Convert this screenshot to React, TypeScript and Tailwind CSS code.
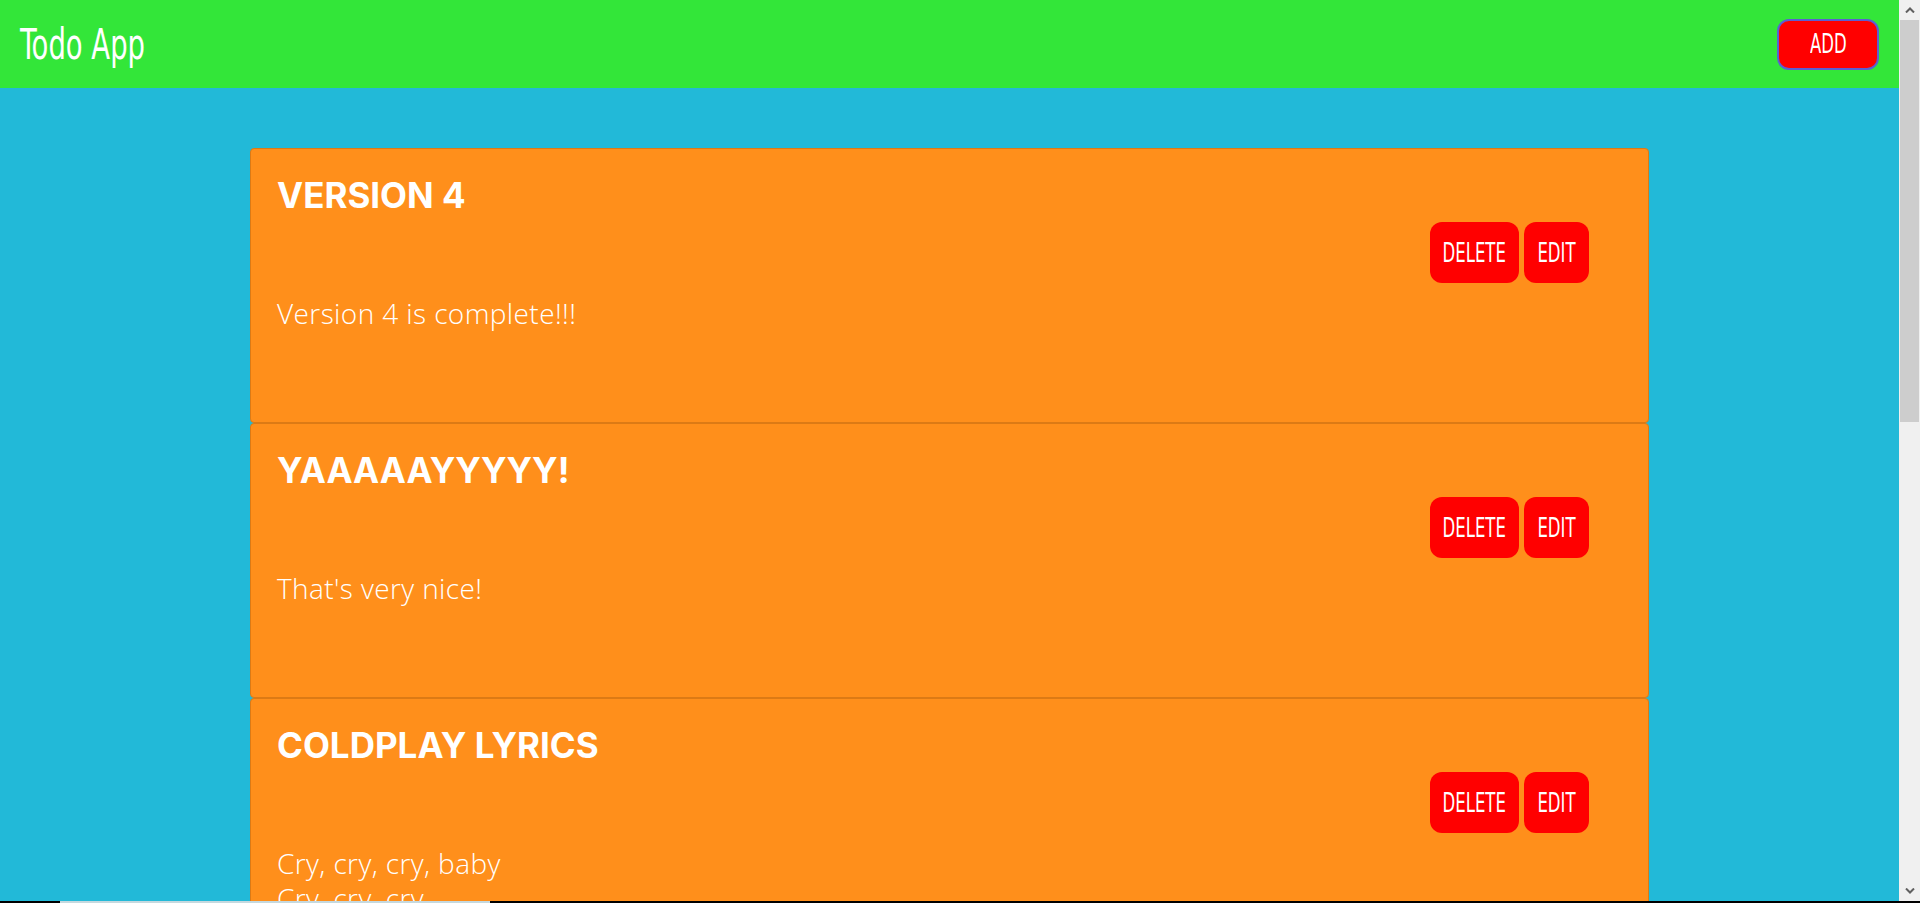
import React from "react";

interface Todo {
  id: number;
  title: string;
  body: string[];
}

const todos: Todo[] = [
  { id: 1, title: "VERSION 4", body: ["Version 4 is complete!!!"] },
  { id: 2, title: "YAAAAAYYYYY!", body: ["That's very nice!"] },
  { id: 3, title: "COLDPLAY LYRICS", body: ["Cry, cry, cry, baby", "Cry, cry, cry"] },
];

// condensed face stands in for Oswald
const condensed = {
  fontFamily: '"DejaVu Sans Condensed", "DejaVu Sans", sans-serif',
};

const Chevron = ({ down }: { down?: boolean }) => (
  <svg width="10" height="6" viewBox="0 0 10 6" className={down ? "rotate-180" : ""}>
    <path d="M1 5.5 L5 1.5 L9 5.5" fill="none" stroke="#606060" strokeWidth="2" />
  </svg>
);

const Scrollbar = () => (
  <div className="w-[21px] shrink-0 bg-[#f0f0f0] flex flex-col">
    <div className="h-[20px] flex items-center justify-center">
      <Chevron />
    </div>
    <div className="h-[402px] ml-[1px] w-[19px] bg-[#cdcdcd]" />
    <div className="flex-1" />
    <div className="h-[20px] flex items-center justify-center">
      <Chevron down />
    </div>
  </div>
);

const TodoCard = ({ todo }: { todo: Todo }) => (
  <div className="w-[1399px] h-[275px] shrink-0 mx-auto flex justify-between items-start bg-[#ff8f1b] border border-[#dc7a15] rounded-[4px] pt-[24px] pl-[26px] pr-[59px] text-white">
    <div>
      <h2
        className="text-[35px] leading-[44px] font-bold"
        style={{ fontFamily: 'Inter, "Liberation Sans", sans-serif' }}
      >
        {todo.title}
      </h2>
      <p
        className="mt-[79px] text-[28px] leading-[35px] tracking-[0.4px] font-light"
        style={{ fontFamily: '"Open Sans", Lato, sans-serif' }}
      >
        {todo.body.map((line, i) => (
          <span key={i} className="block">
            {line}
          </span>
        ))}
      </p>
    </div>
    <div className="mt-[49px] flex gap-[5px]" style={condensed}>
      <button className="w-[89px] h-[61px] rounded-[12px] bg-[#ff0000] text-white flex items-center justify-center text-[27.4px]">
        <span className="inline-block scale-x-[0.67]">DELETE</span>
      </button>
      <button className="w-[65px] h-[61px] rounded-[12px] bg-[#ff0000] text-white flex items-center justify-center text-[27.4px]">
        <span className="inline-block scale-x-[0.67]">EDIT</span>
      </button>
    </div>
  </div>
);

export default function App() {
  return (
    <div className="h-screen flex flex-col overflow-hidden">
      <div className="flex flex-1 min-h-0">
        <div className="flex-1 min-w-0 flex flex-col bg-[#22b9d8] overflow-hidden">
          <header className="h-[88px] shrink-0 bg-[#33e639] flex items-center justify-between pl-[20px] pr-[20px]">
            <h1
              className="text-[43px] text-white inline-block scale-x-[0.71] origin-left"
              style={condensed}
            >
              Todo App
            </h1>
            <button
              className="w-[102px] h-[51px] rounded-[12px] bg-[#ff0000] border-2 border-[#5b5fd2] text-white flex items-center justify-center text-[27.4px]"
              style={condensed}
            >
              <span className="inline-block scale-x-[0.67]">ADD</span>
            </button>
          </header>
          <main className="pt-[60px] flex flex-col">
            {todos.map((todo) => (
              <TodoCard key={todo.id} todo={todo} />
            ))}
          </main>
        </div>
        <Scrollbar />
      </div>
      <div className="h-[2px] shrink-0 flex bg-black">
        <div className="w-[60px]" />
        <div className="w-[430px] bg-[#c5d9df]" />
      </div>
    </div>
  );
}
